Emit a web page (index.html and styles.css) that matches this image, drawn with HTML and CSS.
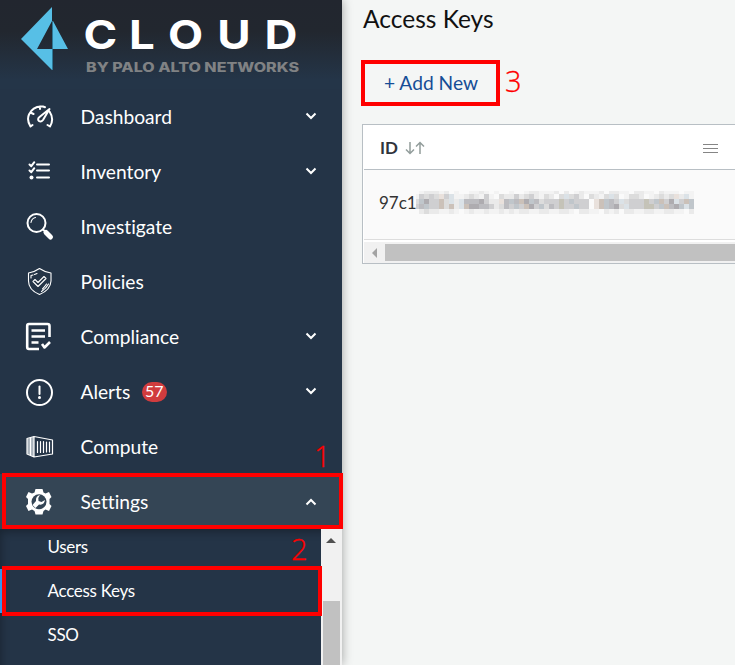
FILE: index.html
```html
<!DOCTYPE html>
<html lang="en">
<head>
<meta charset="utf-8">
<title>Access Keys</title>
<link rel="stylesheet" href="styles.css">
</head>
<body>
<div class="app">
  <aside class="sidebar">
    <header class="brand">
      <svg width="342" height="89" viewBox="0 0 342 89">
        <path fill="#57bfe6" d="M52 7V21L37 49H52V70L21 39ZM53 21L68 49H53Z"/>
        <path stroke="#2e7896" stroke-width="1" d="M52.5 21V70"/>
        <text class="logo-name" transform="scale(1.14 1)" x="73.200 113.200 147.400 190.500 232" y="49.500">CLOUD</text>
        <text class="logo-sub" x="86" y="71.500" textLength="213" lengthAdjust="spacingAndGlyphs">BY PALO ALTO NETWORKS</text>
      </svg>
    </header>
    <nav>
      <a class="item"><svg class="icon" viewBox="0 0 30 30"><g class="line"><path d="M5.500 24.500Q1.500 18 4 12.500Q8 3.500 18 4.500L20 5.200M24.500 9.500Q29.500 17 25 24.500M7.500 23l-2 1.500M22.500 23l2.500 1.500M6.500 11l2 1M15 4.500V7"/><path d="M24.500 7L18 18Q16 20.500 14 19Q12 17 14.500 15Z"/></g></svg><span>Dashboard</span><svg class="chev" viewBox="0 0 12 8"><path d="M1.500 1.500L6 6L10.500 1.500"/></svg></a>
      <a class="item"><svg class="icon" viewBox="0 0 30 30"><g class="line"><path d="M12 7.500H24M12 13.500H24M12 20.500H24M4.500 7.500l1.800 1.700l3-4M4.500 13.500l1.800 1.700l3-4"/></g><circle cx="6.500" cy="20.500" r="2" fill="#fff"/></svg><span>Inventory</span><svg class="chev" viewBox="0 0 12 8"><path d="M1.500 1.500L6 6L10.500 1.500"/></svg></a>
      <a class="item"><svg class="icon" viewBox="0 0 30 30"><g class="line"><circle cx="11.500" cy="11" r="9"/><path class="thin" d="M6 10.500Q6.500 6.500 10.500 5.500"/><path d="M18 17.500l2 2"/></g><path stroke="#fff" stroke-width="5" stroke-linecap="round" d="M21 20.500L25.500 25"/></svg><span>Investigate</span></a>
      <a class="item"><svg class="icon" viewBox="0 0 30 30"><g class="line thin"><path d="M14.500 1.500Q19.500 5 26 6V14Q25.500 23 14.500 27.500Q3.500 23 3.500 14V6Q9.500 5 14.500 1.500Z"/><path d="M8 14.500L10 12.500L13 15.500L19 9.500L21 11.500L13 19.500Z"/><path d="M6 11V8.500L8 8M9.500 7.500L12 6.500M23.500 17Q21.500 21 16.500 24.500M21.500 17Q19.500 20 17.500 22"/></g></svg><span>Policies</span></a>
      <a class="item"><svg class="icon" viewBox="0 0 30 30"><g class="line heavy"><path d="M24.500 15V4Q24.500 2 22.500 2H4Q2.200 2 2.200 4V25Q2.200 27 4 27H14M6.500 8.500H20M6.500 14.500H20M6.500 20.500H13.500"/><path d="M17 22L19.500 25.500L25 20"/></g></svg><span>Compliance</span><svg class="chev" viewBox="0 0 12 8"><path d="M1.500 1.500L6 6L10.500 1.500"/></svg></a>
      <a class="item alerts"><svg class="icon" viewBox="0 0 30 30"><g class="line"><circle cx="14.500" cy="15.500" r="12.500"/><path d="M14.500 9.500V17"/></g><circle cx="14.500" cy="20.500" r="1.500" fill="#fff"/></svg><span>Alerts</span><b class="badge">57</b><svg class="chev" viewBox="0 0 12 8"><path d="M1.500 1.500L6 6L10.500 1.500"/></svg></a>
      <a class="item"><svg class="icon" viewBox="0 0 30 30"><path fill="#a9b2bb" d="M2 7L9 4.500V25L2 21.500Z"/><g class="line compute"><path d="M2 6.500L9 4.500L27.500 8V22L9 25L2 22ZM9 4.500V25M5.500 6V23"/><path d="M12.500 9.500V20.500M15.500 9.500V20.500M18.500 9.500V20.500M21.500 10V20M24.500 10V20"/></g></svg><span>Compute</span></a>
      <a class="item active"><svg class="icon" viewBox="0 0 30 30"><path fill="#fff" d="M10.500 2H17.500L18.500 5.500L20.500 6.500L24 5L26.500 10L24.500 12V17L26.500 19L24 24L20.500 22.500L18.500 24L17.500 27.500H10.500L9.500 24L7 22.500L3.500 24L1 19L3 17V12L1 10L3.500 5L7 6.500L9.500 5.500Z"/><circle cx="14" cy="14.700" r="7.500" fill="#344555"/><path fill="#fff" d="M15 8Q10.500 9 11 14L7.500 18L10.500 21L14 17.500Q19 18.500 20 13L16.500 15L13.500 14L13.300 11Z"/></svg><span>Settings</span><svg class="chev" viewBox="0 0 12 8"><path d="M1.500 6.500L6 2L10.500 6.500"/></svg></a>
    </nav>
    <div class="sub">
      <div class="sublist"><a>Users</a><a class="selected">Access Keys</a><a>SSO</a></div>
      <div class="vscroll"><i class="up"></i><div class="vthumb"></div></div>
    </div>
  </aside>
  <main>
    <h1>Access Keys</h1>
    <button class="add">+ Add New</button>
    <section class="table">
      <div class="thead"><span>ID</span>
        <svg class="sort" viewBox="0 0 20 14"><path d="M5 1V12.500M1 8.500L5 12.500L9 8.500M15 13V1.500M11 5.500L15 1.500L19 5.500"/></svg>
        <svg class="menu" viewBox="0 0 15 11"><path d="M0 1.500H15M0 5.500H15M0 9.500H15"/></svg>
      </div>
      <div class="row"><span>97c1</span><div class="mosaic" id="mosaic"></div></div>
      <div class="hscroll"><i class="left"></i><div class="hthumb"></div></div>
    </section>
  </main>
  <div class="mark mark-settings"></div>
  <div class="mark mark-keys"></div>
  <div class="mark mark-add"></div>
  <b class="num one">1</b><b class="num two">2</b><b class="num three">3</b>
</div>
<script src="mosaic.js"></script>
</body>
</html>
```
FILE: mosaic.js
```
// Pixelated redaction of the key, one letter per block.
const shades = {
  a: '#fafafa', b: '#f3f3f3', c: '#eaeaea', d: '#dcdcdc', e: '#cfcfd1',
  f: '#bcbcc0', g: '#aeacb0', h: '#dbe2e7', i: '#c0c6cb', j: '#cbc1b9',
  k: '#e9e1dc', l: '#c5c3b8'
};
const rows = [
  'abcccbcabaabbcbabaabaabccbbbcacabcbbbcaccbbaccbbacbbbabb',
  'bededkehbbcdcbebadccecdecbdcadhdecadcbdhdabddcabcdcdkchb',
  'digeejdhchfffgecckfifjgifdeeeleieeeakjifehdeeeleijegheji',
  'efieejdjchjggffecdfeiejgeidfeleeieeakjifgdheeelleijfgihi',
  'acdccbbcbabcbbcbbcbcbccbbccbbccbaccbbacbcaccbbccbbccbbac'
];
const box = document.getElementById('mosaic');
rows.forEach(row => {
  for (const code of row) {
    const cell = document.createElement('i');
    cell.style.background = shades[code];
    box.appendChild(cell);
  }
});
```
FILE: styles.css
```css
* { box-sizing: border-box; }
body { margin: 0; font-family: Lato, sans-serif; font-variant-ligatures: none; background: #f4f6f5; }
.app { position: relative; display: flex; width: 735px; height: 665px; overflow: hidden; }
.sidebar { width: 342px; flex: none; display: flex; flex-direction: column; background: #243447; color: #fff; box-shadow: 0 0 10px rgba(0,0,0,.35); }
.brand { height: 89px; background: linear-gradient(#22262f 0, #22272f 35%, #243548 90%); }
.brand svg { display: block; }
.logo-name { font: 700 40px Inter, sans-serif; fill: #fff; }
.logo-sub { font: 800 12.5px Inter, sans-serif; fill: #808284; }
.item { height: 55px; display: flex; align-items: center; padding: 0 25px; font-size: 19.2px; line-height: 24px; }
.item > span { margin-left: 25.5px; }
.icon { width: 30px; height: 30px; flex: none; }
.line { fill: none; stroke: #fff; stroke-width: 2; stroke-linecap: round; stroke-linejoin: round; }
.thin { stroke-width: 1.1; }
.heavy { stroke-width: 2.6; stroke-linecap: butt; }
.compute { stroke-width: 1.2; }
.chev { width: 12px; height: 8px; margin: 0 0 2px auto; fill: none; stroke: #fff; stroke-width: 2; }
.active .chev { margin-bottom: 0; }
.badge { margin-left: 11.5px; width: 25px; height: 20px; border-radius: 10px; background: #d13c3e; font-size: 16px; font-weight: 400; line-height: 18px; text-align: center; }
.active { background: #344555; }
.sub { flex: 1; display: flex; min-height: 0; }
.sublist { flex: 1; display: flex; flex-direction: column; font-size: 17px; letter-spacing: -.3px; box-shadow: inset 5px 7px 8px -4px rgba(0,0,0,.3); }
.sublist a { height: 44px; line-height: 44px; padding-left: 47.5px; }
.sublist a:first-child { height: 40px; line-height: 35px; }
.sublist .selected { box-shadow: inset 3px 0 #3495ec; }
.vscroll { width: 21px; background: #f1f1f1; padding: 9px 2px 0; }
.up { display: block; margin-left: 3px; width: 0; border: 5px solid transparent; border-top: 0; border-bottom-color: #505050; }
.vthumb { margin-top: 58px; height: 80px; background: #c1c1c1; }
main { flex: 1; min-width: 0; padding: 4px 0 0 20px; }
h1 { margin: 0 0 0 1px; height: 56px; font-size: 24.5px; font-weight: 400; line-height: 29px; color: #111; }
.add { display: block; width: 138px; height: 46px; border: 0; padding: 0 0 2px; background: none; font: 19.2px Lato, sans-serif; color: #154d96; }
.table { margin-top: 18px; height: 140px; border: 1px solid #b8bfc4; border-right: 0; background: #fff; padding-left: 1px; }
.thead { height: 45px; display: flex; align-items: center; border-bottom: 1px solid #b8bfc4; padding: 2px 17px 0 16px; font-size: 17px; font-weight: 700; color: #30343b; }
.thead span { position: relative; top: -1px; }
.sort { width: 20px; height: 14px; margin-left: 7px; fill: none; stroke: #929d9b; stroke-width: 1.5; }
.menu { width: 15px; height: 11px; margin-left: auto; stroke: #858585; stroke-width: 1; }
.row { height: 70px; display: flex; align-items: center; background: #fafafa; border-bottom: 1px solid #ddd; padding-left: 15px; font-size: 17px; color: #333; }
.row span { width: 37px; white-space: nowrap; position: relative; top: -2px; }
.mosaic { display: grid; grid-template-columns: 3px repeat(55, 5px); grid-template-rows: 3px repeat(4, 5px); margin-top: -4px; }
.hscroll { margin-top: 2px; height: 21px; background: #f1f1f1; display: flex; align-items: center; padding-left: 8px; }
.left { border: 5px solid transparent; border-left: 0; border-right-color: #a3a3a3; }
.hthumb { flex: 1; height: 17px; margin-left: 8px; background: #c1c1c1; }
.mark { position: absolute; border: 4px solid #f00; }
.mark-settings { left: 2px; top: 473px; width: 341px; height: 56px; }
.mark-keys { left: 2px; top: 566px; width: 320px; height: 50px; }
.mark-add { left: 361px; top: 60px; width: 139px; height: 46px; }
.num { position: absolute; font: 300 29px/30px "Open Sans", sans-serif; color: #f00; -webkit-text-stroke: .3px #f00; }
.one { left: 314px; top: 441px; }
.two { left: 291px; top: 534px; }
.three { left: 505px; top: 66px; }
```
